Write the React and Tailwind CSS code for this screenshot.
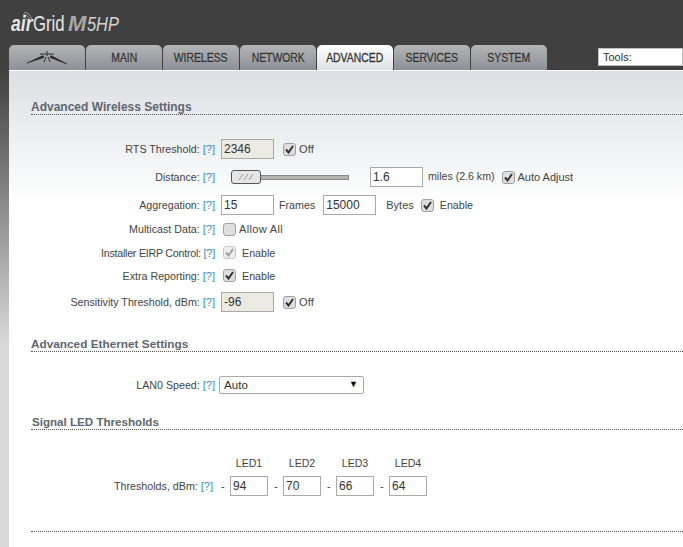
import React from 'react';

const font = { fontFamily: '"Liberation Sans", Arial, sans-serif' };

function Help() {
    return <span className="text-[11px] text-[#3a8fc4]">[?]</span>;
}

function Check({ checked = true, disabled = false }) {
    return (
        <span className={`flex h-[13px] w-[13px] shrink-0 items-center justify-center rounded-[3px] border ${disabled ? 'border-[#c8c8c8] bg-[#eeeeee]' : 'border-[#a0a0a0] bg-[#dedede]'}`}>
            {checked && (
                <svg width="9" height="9" viewBox="0 0 9 9">
                    <path d="M1 4.5 L3.5 7.5 L8 1" fill="none" stroke={disabled ? '#a0a0a0' : '#333333'} strokeWidth="2" />
                </svg>
            )}
        </span>
    );
}

function Field({ value, w = 'w-[53px]', readOnly = false }) {
    return (
        <span className={`flex h-5 shrink-0 items-center border border-[#a9a9a9] pl-[2px] text-[12px] text-[#333333] ${w} ${readOnly ? 'bg-[#ebebe4]' : 'bg-white'}`}>
            {value}
        </span>
    );
}

function Row({ label, h, labelClass = 'text-[10.7px]', children }) {
    return (
        <div className={`flex items-center ${h}`}>
            <div className={`w-[215px] shrink-0 text-right text-[#444444] ${labelClass}`}>
                {label}: <Help />
            </div>
            <div className="ml-[6px] flex items-center text-[#444444]">{children}</div>
        </div>
    );
}

function Section({ title, className = '' }) {
    return (
        <div className={`ml-[31px] border-b border-dotted border-[#555555] font-bold leading-[14px] text-[#5f6670] ${className}`}>
            {title}
        </div>
    );
}

function Dash({ first }) {
    return <span className={`mr-[5px] w-1 shrink-0 ${first ? 'ml-2' : 'ml-[6px]'}`}>-</span>;
}

const tabs = ['MAIN', 'WIRELESS', 'NETWORK', 'ADVANCED', 'SERVICES', 'SYSTEM'];

function Tab({ children, active }) {
    return (
        <div className={`flex h-[25px] w-[76px] items-center justify-center rounded-t-[5px] text-[13px] text-[#333333] [-webkit-text-stroke:0.3px_#333333] ${active ? 'bg-gradient-to-b from-white to-[#dde0e4]' : 'bg-gradient-to-b from-[#b4b5b7] to-[#8c8f96] [text-shadow:0_1px_0_#b8b9bc]'}`}>
            {children}
        </div>
    );
}

function Logo() {
    return (
        <div className="relative flex h-[45px] items-baseline pl-[11px] pt-[13px] leading-[22px] text-[#e6e6e6]">
            <svg className="absolute left-[22px] top-[12px]" width="10" height="9" viewBox="0 0 10 9">
                <path d="M1 5 A4 4 0 0 1 5 8 M1 2.5 A6.5 6.5 0 0 1 7.5 8 M2 0.5 A8 8 0 0 1 9.5 7" fill="none" stroke="#9a9a9a" strokeWidth="1" />
            </svg>
            <span className="inline-block w-[22px] origin-left scale-x-[0.8] text-[22px] font-bold italic">air</span>
            <span className="inline-block w-[35px] origin-left scale-x-[0.76] text-[22px]">Grid</span>
            <span className="inline-block w-[19px] origin-left text-[22px] font-bold italic text-[#a8a8a8]">M</span>
            <span className="inline-block origin-left scale-x-[0.82] text-[20px] italic text-[#d4d4d4]">5HP</span>
        </div>
    );
}

export default function App() {
    return (
        <div className="h-[547px] w-[683px] overflow-hidden bg-[linear-gradient(#404040_70px,#d9d9d9_345px)] text-[11px]" style={font}>
            <Logo />

            <div className="flex h-[25px] pl-[9px]">
                <div className="flex gap-px">
                    <Tab>
                        <svg width="40" height="14" viewBox="0 0 40 14">
                            <path d="M0 12 L16 4.5 L17 6.5 Z M40 13 L24 4.5 L23 6.5 Z" fill="#2a2a2a" stroke="#2a2a2a" strokeWidth="0.6" />
                            <path d="M20 0 V5 M17 11 L19 6 M23 11 L21 6 M13 3 L27 3" fill="none" stroke="#333333" strokeWidth="1" />
                        </svg>
                    </Tab>
                    {tabs.map((t) => (
                        <Tab key={t} active={t === 'ADVANCED'}>
                            <span className="inline-block scale-x-[0.8] whitespace-nowrap">{t}</span>
                        </Tab>
                    ))}
                </div>
                <div className="ml-[51px] mt-[3px] flex h-[18px] flex-1 items-center border border-[#bdbdbd] bg-white pl-1 text-[#333333]">
                    Tools:
                </div>
            </div>

            {/* panel */}
            <div className="ml-[9px] h-[477px] border-t border-white bg-[linear-gradient(#dcdfe3_0px,#ffffff_132px)]">
                <div className="-ml-[9px] pt-[29px]">
                    <Section title="Advanced Wireless Settings" className="text-[12px]" />

                    <div className="pt-[22px]">
                        <Row label="RTS Threshold" h="h-6">
                            <Field value="2346" readOnly />
                            <span className="ml-[9px] mr-[3px]"><Check /></span>
                            <span className="tracking-[0.2px]">Off</span>
                        </Row>
                        <Row label="Distance" h="h-8">
                            <span className="relative ml-[10px] mr-[21px] flex h-5 w-[118px] items-center">
                                <span className="h-[5px] w-full border border-[#888888] bg-[#b5b6ae]" />
                                <span className="absolute left-0 top-[3px] flex h-[14px] w-[30px] items-center justify-center rounded-[3px] border border-[#555555] bg-[#e6e6e6]">
                                    <svg width="16" height="8" viewBox="0 0 16 8">
                                        <path d="M1 7 L5 1 M6 7 L10 1 M11 7 L15 1" stroke="#999999" strokeWidth="1" fill="none" />
                                    </svg>
                                </span>
                            </span>
                            <Field value="1.6" />
                            <span className="ml-[5px] whitespace-nowrap text-[10.6px]">miles (2.6 km)</span>
                            <span className="ml-[7px] mr-[3px]"><Check /></span>
                            <span className="whitespace-nowrap">Auto Adjust</span>
                        </Row>
                        <Row label="Aggregation" h="h-6">
                            <Field value="15" />
                            <span className="ml-[5px] mr-[8px] text-[10.7px]">Frames</span>
                            <Field value="15000" />
                            <span className="ml-[10px] mr-[7px]">Bytes</span>
                            <Check />
                            <span className="ml-[6px] text-[10.7px]">Enable</span>
                        </Row>
                        <Row label="Multicast Data" h="h-6">
                            <span className="ml-[2px] mr-[3px]"><Check checked={false} /></span>
                            <span className="tracking-[0.35px]">Allow All</span>
                        </Row>
                        <Row label="Installer EIRP Control" h="h-6" labelClass="text-[10.7px] tracking-[-0.25px]">
                            <span className="ml-[2px] mr-[6px]"><Check disabled /></span>
                            <span className="text-[10.7px]">Enable</span>
                        </Row>
                        <Row label="Extra Reporting" h="h-[22px]">
                            <span className="ml-[2px] mr-[6px]"><Check /></span>
                            <span className="text-[10.7px]">Enable</span>
                        </Row>
                        <Row label="Sensitivity Threshold, dBm" h="h-[30px]">
                            <Field value="-96" readOnly />
                            <span className="ml-[9px] mr-[3px]"><Check /></span>
                            <span className="tracking-[0.2px]">Off</span>
                        </Row>
                    </div>

                    <Section title="Advanced Ethernet Settings" className="mt-5 text-[11.8px]" />

                    <div className="pt-[23px]">
                        <Row label="LAN0 Speed" h="h-5">
                            <span className="-ml-[2px] flex h-[18px] w-[145px] items-center justify-between rounded-[2px] border border-[#a9a9a9] bg-white pl-1 pr-[5px] text-[11.6px] text-[#333333]">
                                Auto
                                <span className="text-[9px] text-black">▼</span>
                            </span>
                        </Row>
                    </div>

                    <Section title="Signal LED Thresholds" className="mt-5 pl-px text-[11.6px]" />

                    <div className="ml-[230px] mt-[26px] flex gap-[15px] text-[10.6px] leading-[14px] text-[#444444]">
                        <span className="w-[38px] text-center">LED1</span>
                        <span className="w-[38px] text-center">LED2</span>
                        <span className="w-[38px] text-center">LED3</span>
                        <span className="w-[38px] text-center">LED4</span>
                    </div>
                    <div className="mt-[6px] flex h-5 items-center text-[#444444]">
                        <div className="w-[213px] shrink-0 text-right text-[10.7px]">Thresholds, dBm: <Help /></div>
                        <Dash first />
                        <Field value="94" w="w-[38px]" />
                        <Dash />
                        <Field value="70" w="w-[38px]" />
                        <Dash />
                        <Field value="66" w="w-[38px]" />
                        <Dash />
                        <Field value="64" w="w-[38px]" />
                    </div>

                    <div className="ml-[31px] mt-[35px] border-b border-dotted border-[#555555]" />
                </div>
            </div>
        </div>
    );
}
